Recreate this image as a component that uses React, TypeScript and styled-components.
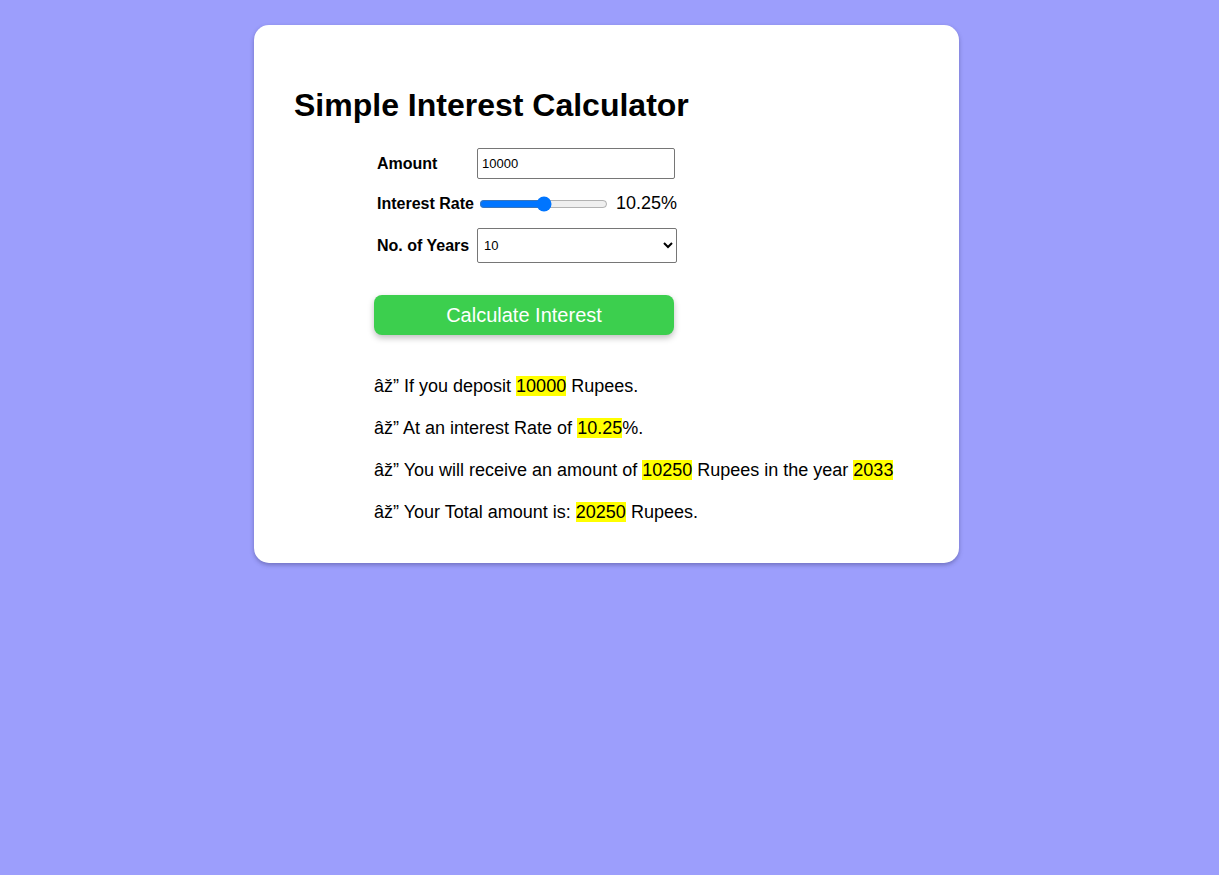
import React, { useState } from 'react';
import styled, { createGlobalStyle } from 'styled-components';

const GlobalStyle = createGlobalStyle`
  html, body {
    margin: 0;
    padding: 0;
    background: #9c9efc;
    font-family: "Liberation Sans", Arial, sans-serif;
  }
`

const Page = styled.main`
  min-height: 875px;
  display: flex;
  justify-content: center;
  align-items: flex-start;
  padding: 25px 6px 0 0;
  box-sizing: border-box;
`

const Card = styled.section`
  width: 705px;
  box-sizing: border-box;
  background: #ffffff;
  border-radius: 15px;
  box-shadow: 0 2px 4px rgba(60, 60, 120, 0.45);
  padding: 62px 40px 39px;
`

const Title = styled.h1`
  margin: 0 0 24px;
  font-size: 32px;
  line-height: 37px;
  font-weight: 700;
  color: #000000;
`

const Body = styled.div`
  padding-left: 80px;
`

const Form = styled.form`
  display: grid;
  grid-template-columns: 100px auto;
  row-gap: 8px;
  align-items: center;
  padding-left: 3px;
`

const Label = styled.label`
  font-size: 16px;
  font-weight: 700;
  color: #000000;
`

const AmountInput = styled.input`
  width: 198px;
  height: 31px;
  box-sizing: border-box;
  border: 1px solid #767676;
  border-radius: 2px;
  padding: 1px 4px;
  font-family: "Liberation Sans", Arial, sans-serif;
  font-size: 13px;
  color: #000000;
`

const RateRow = styled.div`
  display: flex;
  align-items: center;
  gap: 8px;
  height: 33px;
`

const Range = styled.input`
  width: 129px;
  margin: 0 0 0 2px;
  accent-color: #0075ff;
`

const RateValue = styled.span`
  font-size: 18px;
  color: #000000;
`

const YearSelect = styled.select`
  width: 200px;
  height: 35px;
  border: 1px solid #767676;
  border-radius: 2px;
  padding: 0 2px;
  font-family: "Liberation Sans", Arial, sans-serif;
  font-size: 13px;
  color: #000000;
  background: #ffffff;
`

const Button = styled.button`
  display: block;
  width: 300px;
  height: 40px;
  margin: 32px 0 39px;
  background: #3ccf4e;
  color: #ffffff;
  border: none;
  border-radius: 8px;
  box-shadow: 0 3px 6px rgba(0, 0, 0, 0.25);
  font-family: "Liberation Sans", Arial, sans-serif;
  font-size: 20px;
  cursor: pointer;
`

const Result = styled.p`
  margin: 0 0 18px;
  font-size: 18px;
  line-height: 24px;
  color: #000000;
  &:last-child {
    margin-bottom: 0;
  }
`

const Mark = styled.span`
  background: #ffff00;
`

const App: React.FC = () => {
  const [amount, setAmount] = useState<string>('10000')
  const [rate, setRate] = useState<number>(10.25)
  const [years, setYears] = useState<number>(10)

  const principal = Number(amount) || 0
  const interest = Math.round((principal * rate * years) / 100)
  const total = principal + interest
  const year = 2023 + years
  const tick = 'âž”'

  return (
    <>
      <GlobalStyle />
      <Page>
        <Card>
          <Title>Simple Interest Calculator</Title>
          <Body>
            <Form onSubmit={(e) => e.preventDefault()}>
              <Label htmlFor="amount">Amount</Label>
              <AmountInput
                id="amount"
                type="text"
                value={amount}
                onChange={(e) => setAmount(e.currentTarget.value)}
              />
              <Label htmlFor="rate">Interest Rate</Label>
              <RateRow>
                <Range
                  id="rate"
                  type="range"
                  min={0.5}
                  max={20}
                  step={0.25}
                  value={rate}
                  onChange={(e) => setRate(Number(e.currentTarget.value))}
                />
                <RateValue>{rate}%</RateValue>
              </RateRow>
              <Label htmlFor="years">No. of Years</Label>
              <YearSelect
                id="years"
                value={years}
                onChange={(e) => setYears(Number(e.currentTarget.value))}
              >
                {Array.from({ length: 10 }, (_, i) => i + 1).map((n) => (
                  <option key={n} value={n}>{n}</option>
                ))}
              </YearSelect>
            </Form>
            <Button type="button">Calculate Interest</Button>
            <Result>{tick} If you deposit <Mark>{principal}</Mark> Rupees.</Result>
            <Result>{tick} At an interest Rate of <Mark>{rate}</Mark>%.</Result>
            <Result>{tick} You will receive an amount of <Mark>{interest}</Mark> Rupees in the year <Mark>{year}</Mark></Result>
            <Result>{tick} Your Total amount is: <Mark>{total}</Mark> Rupees.</Result>
          </Body>
        </Card>
      </Page>
    </>
  )
}

export default App;
